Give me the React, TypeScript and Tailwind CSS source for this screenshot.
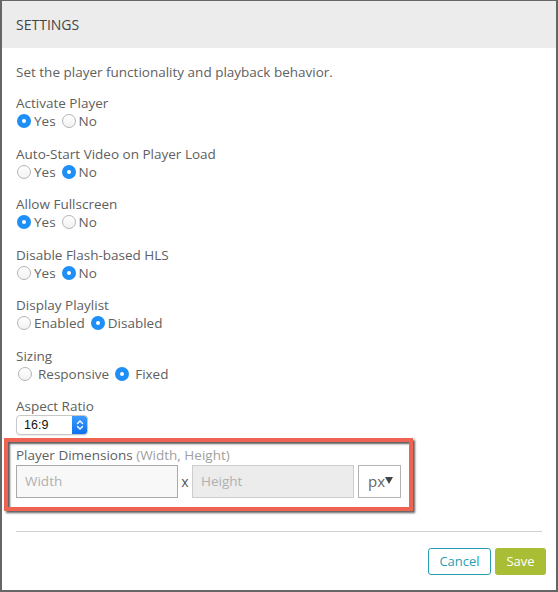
import React from "react";

function Radio({ checked }: { checked: boolean }) {
  return checked ? (
    <span className="inline-flex h-[14px] w-[14px] shrink-0 items-center justify-center rounded-full bg-[#1d8ff6]">
      <span className="h-[4px] w-[4px] rounded-full bg-white" />
    </span>
  ) : (
    <span className="inline-block h-[14px] w-[14px] shrink-0 rounded-full border border-[#b4b4b4] bg-gradient-to-b from-white to-[#f2f2f2]" />
  );
}

function Group({
  label,
  options,
  selected,
  wide,
}: {
  label: string;
  options: string[];
  selected: number;
  wide?: boolean;
}) {
  return (
    <div className="flex flex-col">
      <div className="h-[18px] leading-[18px]">{label}</div>
      <div className={`flex h-[18px] items-center leading-[18px] ${wide ? "pl-[2px]" : "pl-px"}`}>
        {options.map((o, i) => (
          <span
            key={o}
            className={`flex items-center ${wide ? "gap-[6px]" : "gap-[3px]"} ${i > 0 ? "ml-[6px]" : ""}`}
          >
            <Radio checked={i === selected} />
            <span>{o}</span>
          </span>
        ))}
      </div>
    </div>
  );
}

export default function App() {
  return (
    <div
      className="flex h-[592px] w-[558px] flex-col border-2 border-t-[1.5px] border-[#666] bg-white text-[13.5px] text-[#606060]"
      style={{ fontFamily: "'Open Sans', Lato, sans-serif" }}
    >
      <div className="flex h-[47px] items-center bg-[#ececec] pl-[14px] text-[14px] text-[#454545]">
        SETTINGS
      </div>
      <div className="flex flex-col pl-[14px] pr-[14px] pt-[15px]">
        <div className="h-[18px] leading-[18px]">Set the player functionality and playback behavior.</div>
        <div className="mt-[13px] flex flex-col gap-[14.5px]">
          <Group label="Activate Player" options={["Yes", "No"]} selected={0} />
          <Group label="Auto-Start Video on Player Load" options={["Yes", "No"]} selected={1} />
          <Group label="Allow Fullscreen" options={["Yes", "No"]} selected={0} />
          <Group label="Disable Flash-based HLS" options={["Yes", "No"]} selected={1} />
          <Group label="Display Playlist" options={["Enabled", "Disabled"]} selected={1} />
          <Group label="Sizing" options={["Responsive", "Fixed"]} selected={1} wide />
          <div className="flex flex-col">
            <div className="h-[18px] leading-[18px]">Aspect Ratio</div>
            <div className="flex h-[20px] w-[72px] items-stretch overflow-hidden rounded-[4px] border border-[#c8c8c8] bg-white shadow-[0_1px_1px_rgba(0,0,0,0.08)]">
              <span
                className="flex flex-1 items-center pl-[7px] text-[12.5px] text-[#111]"
                style={{ fontFamily: "'Liberation Sans', Arial, sans-serif" }}
              >
                16:9
              </span>
              <span className="flex w-[15px] items-center justify-center bg-gradient-to-b from-[#3b9bff] to-[#0a70f0]">
                <svg width="8" height="12" viewBox="0 0 8 12" fill="none" stroke="white" strokeWidth="1.4" strokeLinecap="round" strokeLinejoin="round">
                  <path d="M1.5 4.5 L4 2 L6.5 4.5" />
                  <path d="M1.5 7.5 L4 10 L6.5 7.5" />
                </svg>
              </span>
            </div>
          </div>
        </div>
      </div>

      <div className="ml-[2px] mt-[3px] w-[409px] border-[4px] border-[#ee6352] pb-[9px] pl-[8px] pt-[4px] shadow-[2px_2px_2px_rgba(40,40,40,0.75),inset_2px_2px_2px_rgba(40,40,40,0.75)]">
        <div className="h-[18px] leading-[18px]">
          Player Dimensions <span className="text-[#a0a0a0]">(Width, Height)</span>
        </div>
        <div className="mt-px flex items-center">
          <div className="flex h-[33px] w-[162px] items-center border border-[#a9a9a9] bg-[#f8f8f8] pl-[8px] text-[13.5px] text-[#b0b0b0]">
            Width
          </div>
          <div className="w-[14px] text-center text-[14px] text-[#555]">x</div>
          <div className="flex h-[33px] w-[162px] items-center border border-[#cdcdcd] bg-[#ececec] pl-[8px] text-[13.5px] text-[#b0b0b0]">
            Height
          </div>
          <div className="ml-[4px] flex h-[33px] w-[43px] items-center border border-[#b4b4b4] bg-white pl-[9px] text-[15px] text-[#666]">
            px
            <svg width="8" height="7" viewBox="0 0 8 7" className="ml-0 mb-[2px]">
              <path d="M0 0 H8 L4 7 Z" fill="#444" />
            </svg>
          </div>
        </div>
      </div>

      <div className="ml-[14px] mr-[14px] mt-[20px] h-px bg-[#d0d0d0]" />
      <div className="mr-[10px] mt-[16px] flex justify-end gap-[4px]">
        <button className="h-[27px] w-[63px] rounded-[3px] border border-[#2a9cb1] bg-white text-[13px] text-[#2a9cb1]">
          Cancel
        </button>
        <button className="h-[27px] w-[51px] rounded-[3px] bg-[#a9bd35] text-[13px] text-white">
          Save
        </button>
      </div>
    </div>
  );
}
